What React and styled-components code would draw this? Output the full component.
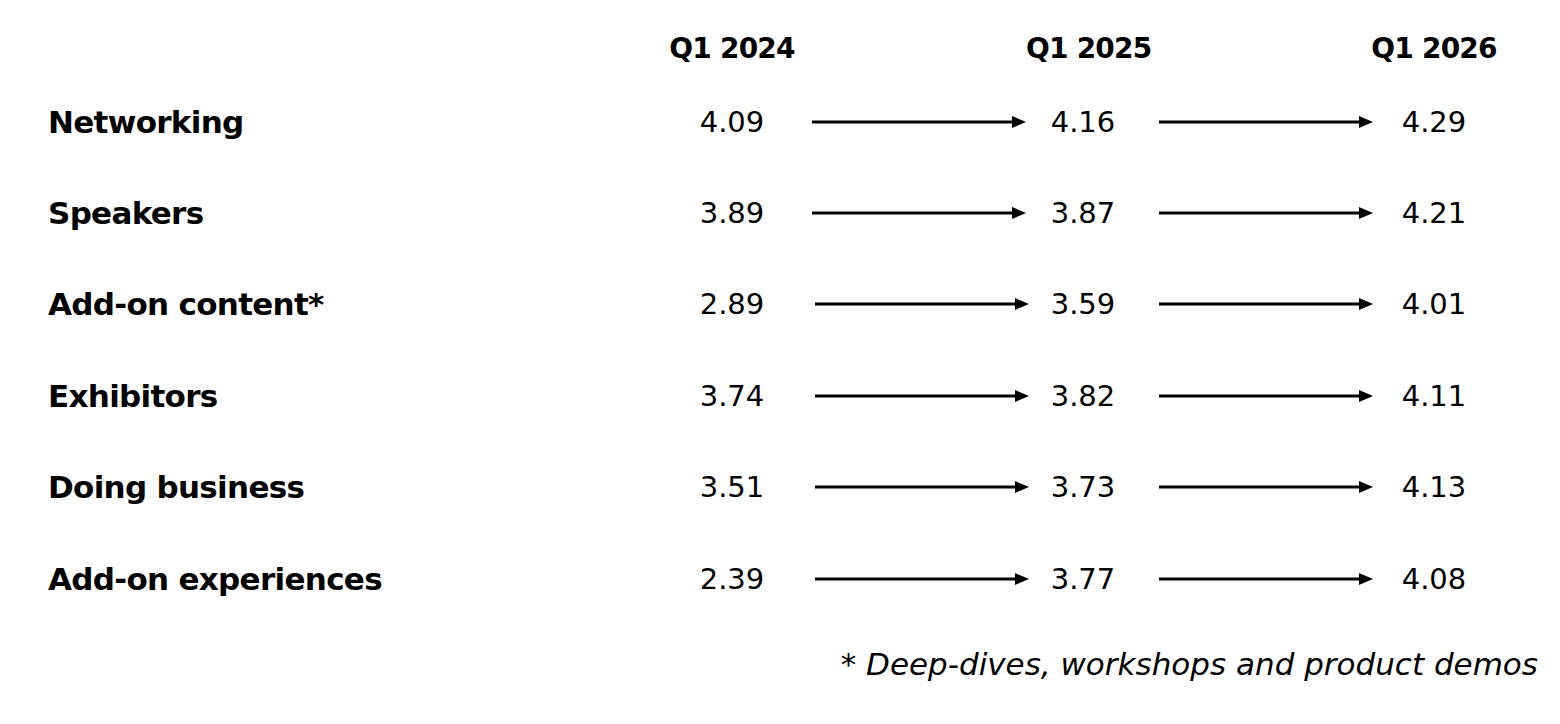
import React from 'react';
import styled, { createGlobalStyle } from 'styled-components';

const GlobalStyle = createGlobalStyle`
  html, body {
    margin: 0;
    padding: 0;
    background: #ffffff;
  }
  body {
    font-family: "DejaVu Sans", "Noto Sans", sans-serif;
    color: #000000;
  }
`;

const Page = styled.div`
  width: 1560px;
  height: 724px;
  box-sizing: border-box;
  padding: 20px 22px 0 48px;
  background: #ffffff;
`;

const Table = styled.div`
  display: grid;
  grid-template-columns: 620px 128px 230px 114px 230px 128px;
  grid-template-rows: 56px repeat(6, 91.4px);
  align-items: center;
`;

const Header = styled.div`
  grid-column: ${p => p.col};
  text-align: center;
  white-space: nowrap;
  font-weight: 700;
  font-size: 28px;
  letter-spacing: -0.8px;
`;

const Label = styled.div`
  grid-column: 1;
  white-space: nowrap;
  font-weight: 700;
  font-size: 31px;
  letter-spacing: -0.7px;
`;

const Value = styled.div`
  text-align: center;
  white-space: nowrap;
  font-size: 29px;
  letter-spacing: 0px;
`;

const ArrowCell = styled.div`
  display: flex;
  align-items: center;
  padding-left: ${p => p.$lead}px;
  margin-right: ${p => p.$tail}px;
`;

const ArrowSvg = styled.svg`
  display: block;
  width: 100%;
  height: 14px;
`;

const Footnote = styled.div`
  margin-top: 20px;
  text-align: right;
  white-space: nowrap;
  font-style: italic;
  font-size: 31px;
  letter-spacing: 0px;
  line-height: 40px;
`;

const Arrow = ({ lead = 16, tail = 0 }) => (
  <ArrowCell $lead={lead} $tail={tail}>
    <ArrowSvg viewBox="0 0 214 14" preserveAspectRatio="none">
      <line x1="0" y1="7" x2="202" y2="7" stroke="#000" strokeWidth="2.8" />
      <polygon points="200,1 214,7 200,13" fill="#000" />
    </ArrowSvg>
  </ArrowCell>
);

const rows = [
  { name: 'Networking', v: ['4.09', '4.16', '4.29'], shift: 0 },
  { name: 'Speakers', v: ['3.89', '3.87', '4.21'], shift: 0 },
  { name: 'Add-on content*', v: ['2.89', '3.59', '4.01'], shift: 3 },
  { name: 'Exhibitors', v: ['3.74', '3.82', '4.11'], shift: 3 },
  { name: 'Doing business', v: ['3.51', '3.73', '4.13'], shift: 3 },
  { name: 'Add-on experiences', v: ['2.39', '3.77', '4.08'], shift: 3 },
];

export default function App() {
  return (
    <Page>
      <GlobalStyle />
      <Table>
        <div />
        <Header col={2}>Q1 2024</Header>
        <div />
        <Header col={4}>Q1 2025</Header>
        <div />
        <Header col={6}>Q1 2026</Header>
        {rows.map(r => (
          <React.Fragment key={r.name}>
            <Label>{r.name}</Label>
            <Value>{r.v[0]}</Value>
            <Arrow lead={16 + r.shift} tail={-r.shift} />
            <Value>{r.v[1]}</Value>
            <Arrow lead={19} tail={-3} />
            <Value>{r.v[2]}</Value>
          </React.Fragment>
        ))}
      </Table>
      <Footnote>* Deep-dives, workshops and product demos</Footnote>
    </Page>
  );
}
